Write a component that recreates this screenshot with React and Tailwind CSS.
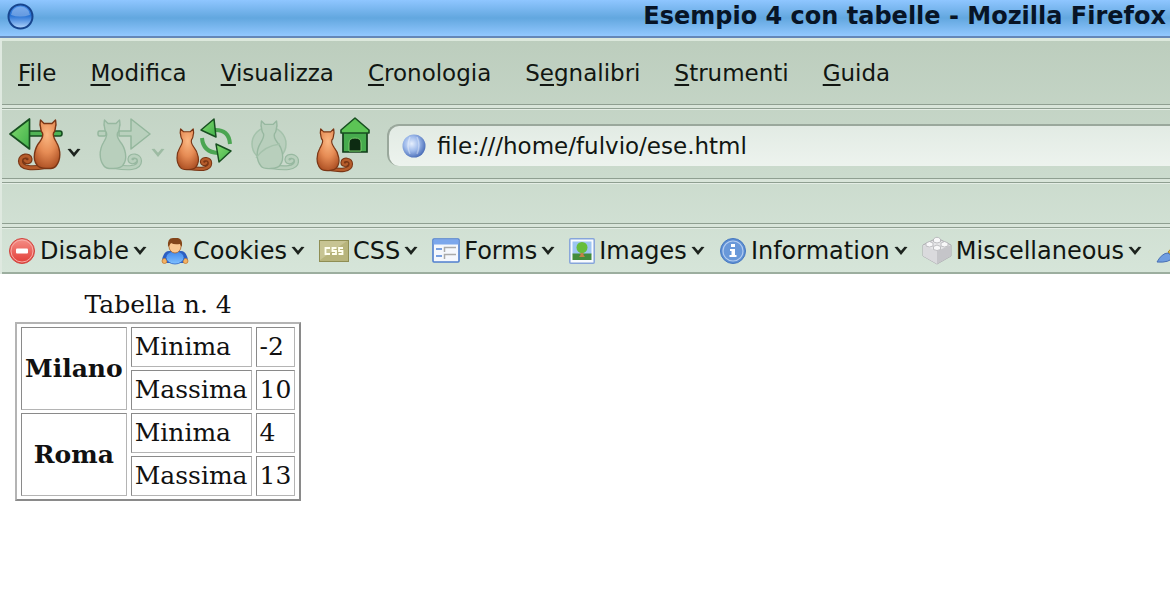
import React from "react";

const BODY =
  "M5.5 1 L9 4.5 H17 L20.500 1 C21 4 21.500 6 20.500 8 C20 10.500 20.500 12 18.500 14 C17.500 17 18.500 19 21 22.500 C26.500 29 29 40 24 46 C22 50 8 51 5 47 C0 41 0 31 4.500 23.500 C7 19 8.500 17 7.500 14 C5.500 12 6 10.500 5.500 8 C4.500 6 5 4 5.500 1 Z";
const TAIL = "M15 47.500 C28 49.500 40.500 50 40.500 42 C40.500 36 31.500 35.500 31 40 C31 43 34.500 43.500 36 41.5";

function Cat({ transform, faded }) {
  const line = faded ? "#97b8a0" : "#7a3615";
  const tail = faded ? "#b9d0bd" : "#b55c2b";
  return (
    <g transform={transform}>
      <path d={TAIL} fill="none" stroke={line} strokeWidth="5.2" strokeLinecap="round" />
      <path d={TAIL} fill="none" stroke={tail} strokeWidth="2.8" strokeLinecap="round" />
      <path d={BODY} fill={faded ? "#b8cfbc" : "url(#fur)"} stroke={line} strokeWidth="1.4" strokeLinejoin="round" />
    </g>
  );
}

function Defs() {
  return (
    <svg className="absolute size-0" aria-hidden="true">
      <defs>
        <radialGradient id="fur" cx="0.5" cy="0.3" r="0.75">
          <stop offset="0" stopColor="#fbb883" />
          <stop offset="0.5" stopColor="#e68c55" />
          <stop offset="1" stopColor="#a94c20" />
        </radialGradient>
        <linearGradient id="leaf" x1="0" y1="0" x2="1" y2="1">
          <stop offset="0" stopColor="#86dc70" />
          <stop offset="1" stopColor="#3fb04a" />
        </linearGradient>
        <linearGradient id="orb" x1="0" y1="0" x2="0" y2="1">
          <stop offset="0" stopColor="#4a90ea" />
          <stop offset="0.45" stopColor="#2470d4" />
          <stop offset="1" stopColor="#b4d6fc" />
        </linearGradient>
        <radialGradient id="globe" cx="0.4" cy="0.4" r="0.65">
          <stop offset="0" stopColor="#e6effd" />
          <stop offset="0.5" stopColor="#9db9ea" />
          <stop offset="1" stopColor="#4468b4" />
        </radialGradient>
        <linearGradient id="red" x1="0" y1="0" x2="0" y2="1">
          <stop offset="0" stopColor="#f59088" />
          <stop offset="1" stopColor="#e23c36" />
        </linearGradient>
        <linearGradient id="shirt" x1="0" y1="0" x2="0" y2="1">
          <stop offset="0" stopColor="#3f86ea" />
          <stop offset="1" stopColor="#7fc0ff" />
        </linearGradient>
      </defs>
    </svg>
  );
}

function BackIcon() {
  return (
    <svg width="54" height="54" viewBox="9 118 54 54" aria-hidden="true">
      <path d="M29 131 H60 Q62 131 62 133.500 Q62 136 60 136 H29 Z" fill="#4fb355" stroke="#164d20" strokeWidth="1.6" />
      <path d="M10 134 L29.500 119 V149 Z" fill="url(#leaf)" stroke="#174f20" strokeWidth="1.7" strokeLinejoin="round" />
      <Cat transform="translate(61 119) scale(-1 1)" />
    </svg>
  );
}

function ForwardIcon() {
  return (
    <svg width="54" height="54" viewBox="96 118 54 54" aria-hidden="true">
      <Cat transform="translate(98 119)" faded />
      <rect x="97" y="131" width="8" height="5" rx="1.500" fill="#b9d0bd" stroke="#93b69c" strokeWidth="1.4" />
      <path d="M118 131 H130 V119 L149 134 L130 149 V136 H118 Z" fill="#b9d0bd" stroke="#93b69c" strokeWidth="1.5" strokeLinejoin="round" />
    </svg>
  );
}

function ReloadIcon() {
  return (
    <svg width="58" height="54" viewBox="175 117 58 54" aria-hidden="true">
      <Cat transform="translate(176 127) scale(0.84)" />
      <path d="M214 129 Q229 128 230 143" fill="none" stroke="#4ba552" strokeWidth="4" />
      <path d="M202 137 Q203 151 218 152" fill="none" stroke="#4ba552" strokeWidth="4" />
      <path d="M201 129 L214 118 L216 136 Z" fill="url(#leaf)" stroke="#174f20" strokeWidth="1.5" strokeLinejoin="round" />
      <path d="M231 150 L216 143 L219 161 Z" fill="url(#leaf)" stroke="#174f20" strokeWidth="1.5" strokeLinejoin="round" />
    </svg>
  );
}

function StopIcon() {
  return (
    <svg width="50" height="54" viewBox="249 118 50 54" aria-hidden="true">
      <circle cx="269" cy="144" r="17" fill="#b9cfbd" stroke="#a4c2ab" strokeWidth="1.5" />
      <Cat transform="translate(256 120) scale(1 0.98)" faded />
      <path d="M256 158 Q264 146 280 144" fill="none" stroke="#a4c2ab" strokeWidth="1.3" />
    </svg>
  );
}

function HomeIcon() {
  return (
    <svg width="56" height="56" viewBox="316 116 56 56" aria-hidden="true">
      <Cat transform="translate(317 127) scale(0.86)" />
      <path d="M344 130 H368 V151 H344 Z" fill="#46ab4d" stroke="#123d1a" strokeWidth="1.7" />
      <path d="M356 117 L370 129 V132 H342 V129 Z" fill="#5cc455" stroke="#174f20" strokeWidth="1.6" strokeLinejoin="round" />
      <path d="M350 150 V142 Q350 137 356 137 Q362 137 362 142 V150 Z" fill="#0d2b12" stroke="#78cf6b" strokeWidth="1" />
    </svg>
  );
}

function Chevron({ faded }) {
  return (
    <svg width="14" height="10" viewBox="0 0 14 10" aria-hidden="true">
      <path d="M0.500 1 L3.500 0.800 L7 4.800 L10.500 0.800 L13.500 1 L7 9 Z" fill={faded ? "#9dbba3" : "#1d231e"} />
    </svg>
  );
}

const extIcons = {
  Disable: (
    <svg width="28" height="28" viewBox="0 0 28 28">
      <circle cx="14" cy="14" r="12.5" fill="url(#red)" stroke="#d0443e" />
      <circle cx="14" cy="14" r="11" fill="none" stroke="#f7aca6" />
      <rect x="8" y="11.500" width="12" height="5" rx="1" fill="#fff" />
    </svg>
  ),
  Cookies: (
    <svg width="28" height="28" viewBox="0 0 28 28">
      <path d="M1 23 Q3 13 9 14 H19 Q25 13 27 23 L23 26 H5 Z" fill="#2d5fc0" />
      <circle cx="3.500" cy="24" r="2.500" fill="#f2b264" stroke="#c57a30" strokeWidth="0.800" />
      <circle cx="24.500" cy="24" r="2.500" fill="#f2b264" stroke="#c57a30" strokeWidth="0.800" />
      <ellipse cx="14" cy="20.500" rx="9" ry="6.500" fill="url(#shirt)" stroke="#2b64c9" strokeWidth="0.800" />
      <ellipse cx="14" cy="9.500" rx="6" ry="6.500" fill="#fac790" stroke="#a8632a" strokeWidth="0.800" />
      <path d="M7 10 Q6 1 12 1 H17 Q22 2 21 10 L19 7 Q13 8 10 6 Z" fill="#84461a" />
    </svg>
  ),
  CSS: (
    <svg width="30" height="22" viewBox="0 0 30 22">
      <rect x="0.500" y="0.500" width="29" height="21" fill="#b7b47b" stroke="#8f8e54" />
      <path d="M1 1 H28 L1 20 Z" fill="#cdcb9e" opacity="0.700" />
      <g fill="none" stroke="#fffff0" strokeWidth="1.800">
        <path d="M11 8 H6.500 V14 H11" />
        <path d="M17.500 8 H13.500 V11 H17 V14 H13" />
        <path d="M24 8 H20 V11 H23.500 V14 H19.500" />
      </g>
    </svg>
  ),
  Forms: (
    <svg width="28" height="26" viewBox="0 0 28 26">
      <rect x="1" y="1" width="26" height="23" rx="1" fill="#f5f8fd" stroke="#507fce" strokeWidth="1.600" />
      <rect x="1.500" y="1.500" width="25" height="5" fill="#7ba7ec" />
      <path d="M4 11 H10 M4 18 H10" stroke="#4f83d6" strokeWidth="1.600" />
      <path d="M12.500 14 V9.500 H24 M12.500 21 V16.500 H24" fill="none" stroke="#aaa" strokeWidth="1.500" />
    </svg>
  ),
  Images: (
    <svg width="26" height="26" viewBox="0 0 26 26">
      <rect x="0.800" y="0.800" width="24.400" height="24.400" rx="1" fill="#f8fbff" stroke="#86a5da" strokeWidth="1.500" />
      <rect x="3.500" y="3.500" width="19" height="13" fill="#9dc5f2" />
      <rect x="3.500" y="15.500" width="19" height="6.500" fill="#438c3c" />
      <path d="M11.500 13 H14.500 V17 L16 19 H10 L11.500 17 Z" fill="#c28345" />
      <circle cx="13" cy="9.500" r="5.500" fill="#67bd3b" />
    </svg>
  ),
  Information: (
    <svg width="28" height="28" viewBox="0 0 28 28">
      <circle cx="14" cy="14" r="12.500" fill="#5c8ed3" stroke="#4678c0" />
      <circle cx="14" cy="14" r="10" fill="#6998d9" stroke="#b4cdf0" strokeWidth="1.200" />
      <path d="M12 7 H16 V10 H12 Z M11 12 H16 V18 H17.500 V20 H10.500 V18 H12.500 V14 H11 Z" fill="#fff" />
    </svg>
  ),
  Miscellaneous: (
    <svg width="30" height="30" viewBox="0 0 30 30">
      <path d="M1 9 L15 2 L29 9 V20 L15 28 L1 20 Z" fill="#e7e7e9" stroke="#a9a9ad" />
      <path d="M15 15 L29 9 V20 L15 28 Z" fill="#c5c5c9" />
      <path d="M1 9 L15 15 V28 L1 20 Z" fill="#dadadd" />
      <g fill="#f8f8f9" stroke="#b0b0b4" strokeWidth="0.800">
        <path d="M11.500 3 V6 Q15 8 18.500 6 V3 Q15 -0.500 11.500 3 Z" />
        <path d="M4 7 V10 Q7.500 12 11 10 V7 Q7.500 4 4 7 Z" />
        <path d="M19 7 V10 Q22.500 12 26 10 V7 Q22.500 4 19 7 Z" />
        <path d="M11.500 10.500 V13.500 Q15 15.500 18.500 13.500 V10.500 Q15 7.500 11.500 10.500 Z" />
      </g>
    </svg>
  ),
};

const menus = [
  ["", "F", "ile"],
  ["", "M", "odifica"],
  ["", "V", "isualizza"],
  ["", "C", "ronologia"],
  ["S", "e", "gnalibri"],
  ["", "S", "trumenti"],
  ["", "G", "uida"],
];

function Separator() {
  return (
    <div className="h-[5px] border-y border-[#8f9f91] bg-[#d9e5da] shadow-[0_1px_0_#e4ede5]" />
  );
}

const cell = "h-10 border border-t-[#8a8a8a] border-l-[#8a8a8a] border-r-[#b4b4b4] border-b-[#b4b4b4] px-[3px] py-0 leading-7 text-left";
const head = "border border-t-[#8a8a8a] border-l-[#8a8a8a] border-r-[#b4b4b4] border-b-[#b4b4b4] px-[3px] py-0 text-center font-bold";

const cities = [
  { name: "Milano", min: "-2", max: "10" },
  { name: "Roma", min: "4", max: "13" },
];

export default function App() {
  return (
    <div className="min-h-screen overflow-hidden bg-white text-[#111612] [font-family:'DejaVu_Sans',sans-serif]">
      <Defs />
      <header className="flex h-[38px] items-start justify-between border-b-2 border-[#6487b8] bg-linear-to-b from-[#8fc6ff] via-[#62a7df] to-[#92c8ff] pr-1 pl-[7px]">
        <svg className="mt-[3px] shrink-0" width="27" height="27" viewBox="0 0 27 27" aria-hidden="true">
          <circle cx="13.500" cy="13.500" r="12" fill="url(#orb)" stroke="#17458e" strokeWidth="2" />
          <path d="M4 12 Q5 4 13.500 3.500 Q22 4 23 12 Q13 15 4 12 Z" fill="#fff" opacity="0.300" />
        </svg>
        <h1 className="text-2xl leading-8 font-bold whitespace-nowrap text-[#071426]">
          Esempio 4 con tabelle - Mozilla Firefox
        </h1>
      </header>

      <div className="border-l-2 border-[#dfe9e0] bg-linear-to-b from-[#bccdbd] to-[#d6e5d9]">
        <nav className="flex h-[66px] items-center gap-[34px] border-t-[3px] border-[#dce8dc] pl-4 text-[23px]">
          {menus.map(([before, key, after]) => (
            <button key={before + key + after} type="button" className="leading-8">
              {before}
              <span className="underline decoration-2 underline-offset-3">{key}</span>
              {after}
            </button>
          ))}
        </nav>
        <Separator />

        <div className="flex h-[69px] items-center pt-0.5">
          <button type="button" aria-label="Indietro" className="ml-[7px] flex items-center gap-1">
            <BackIcon />
            <span className="pt-4"><Chevron /></span>
          </button>
          <button type="button" aria-label="Avanti" disabled className="ml-4 flex items-center">
            <ForwardIcon />
            <span className="pt-4"><Chevron faded /></span>
          </button>
          <button type="button" aria-label="Ricarica" className="ml-2.5"><ReloadIcon /></button>
          <button type="button" aria-label="Ferma" disabled className="ml-4"><StopIcon /></button>
          <button type="button" aria-label="Pagina iniziale" className="ml-4"><HomeIcon /></button>
          <label className="ml-4 flex h-[42px] min-w-0 flex-1 items-center gap-2.5 rounded-l-xl border-t-2 border-l-2 border-[#9aa89c] bg-linear-to-b from-[#e2ebe4] to-[#edf3ee] pl-3">
            <svg width="26" height="26" viewBox="0 0 26 26" className="shrink-0" aria-hidden="true">
              <circle cx="13" cy="13" r="11.500" fill="url(#globe)" />
              <path d="M9 4 Q5 13 9 21 M16 4 Q20 12 16 21" fill="none" stroke="#fff" strokeWidth="1.500" opacity="0.350" />
            </svg>
            <input
              aria-label="Indirizzo"
              defaultValue="file:///home/fulvio/ese.html"
              className="w-full min-w-0 bg-transparent text-[23px] leading-8 outline-none"
            />
          </label>
        </div>
        <Separator />
        <div className="h-10" />
        <Separator />

        <div className="flex h-[46px] items-center border-b-2 border-[#9cae9f] pt-0.5 pl-[6px] text-2xl">
          {Object.entries(extIcons).map(([name, icon]) => (
            <button key={name} type="button" className="mr-[14px] flex shrink-0 items-center gap-1 leading-8">
              {icon}
              <span>{name}</span>
              <Chevron />
            </button>
          ))}
          <button type="button" aria-label="Outline" className="shrink-0">
            <svg width="28" height="28" viewBox="0 0 28 28">
              <path d="M12 15 L24 2 L27 5 L17 19 Z" fill="#e8be45" stroke="#ad852b" />
              <path d="M1 25 Q6 16 12 16 L17 20 Q14 26 1 25 Z" fill="#6f9de0" stroke="#4970b4" />
            </svg>
          </button>
        </div>
      </div>

      <main className="px-[15px] pt-[14px] text-[25px] text-[#111] [font-family:'DejaVu_Serif',serif]">
        <table className="border-separate border-spacing-x-1 border-spacing-y-[3px] border-2 border-t-[#b4b4b4] border-l-[#b4b4b4] border-r-[#8a8a8a] border-b-[#8a8a8a]">
          <caption className="leading-[34px]">Tabella n. 4</caption>
          <tbody>
            {cities.map((city) => (
              <React.Fragment key={city.name}>
                <tr>
                  <th scope="rowgroup" rowSpan={2} className={head}>{city.name}</th>
                  <td className={cell}>Minima</td>
                  <td className={cell}>{city.min}</td>
                </tr>
                <tr>
                  <td className={cell}>Massima</td>
                  <td className={cell}>{city.max}</td>
                </tr>
              </React.Fragment>
            ))}
          </tbody>
        </table>
      </main>
    </div>
  );
}
